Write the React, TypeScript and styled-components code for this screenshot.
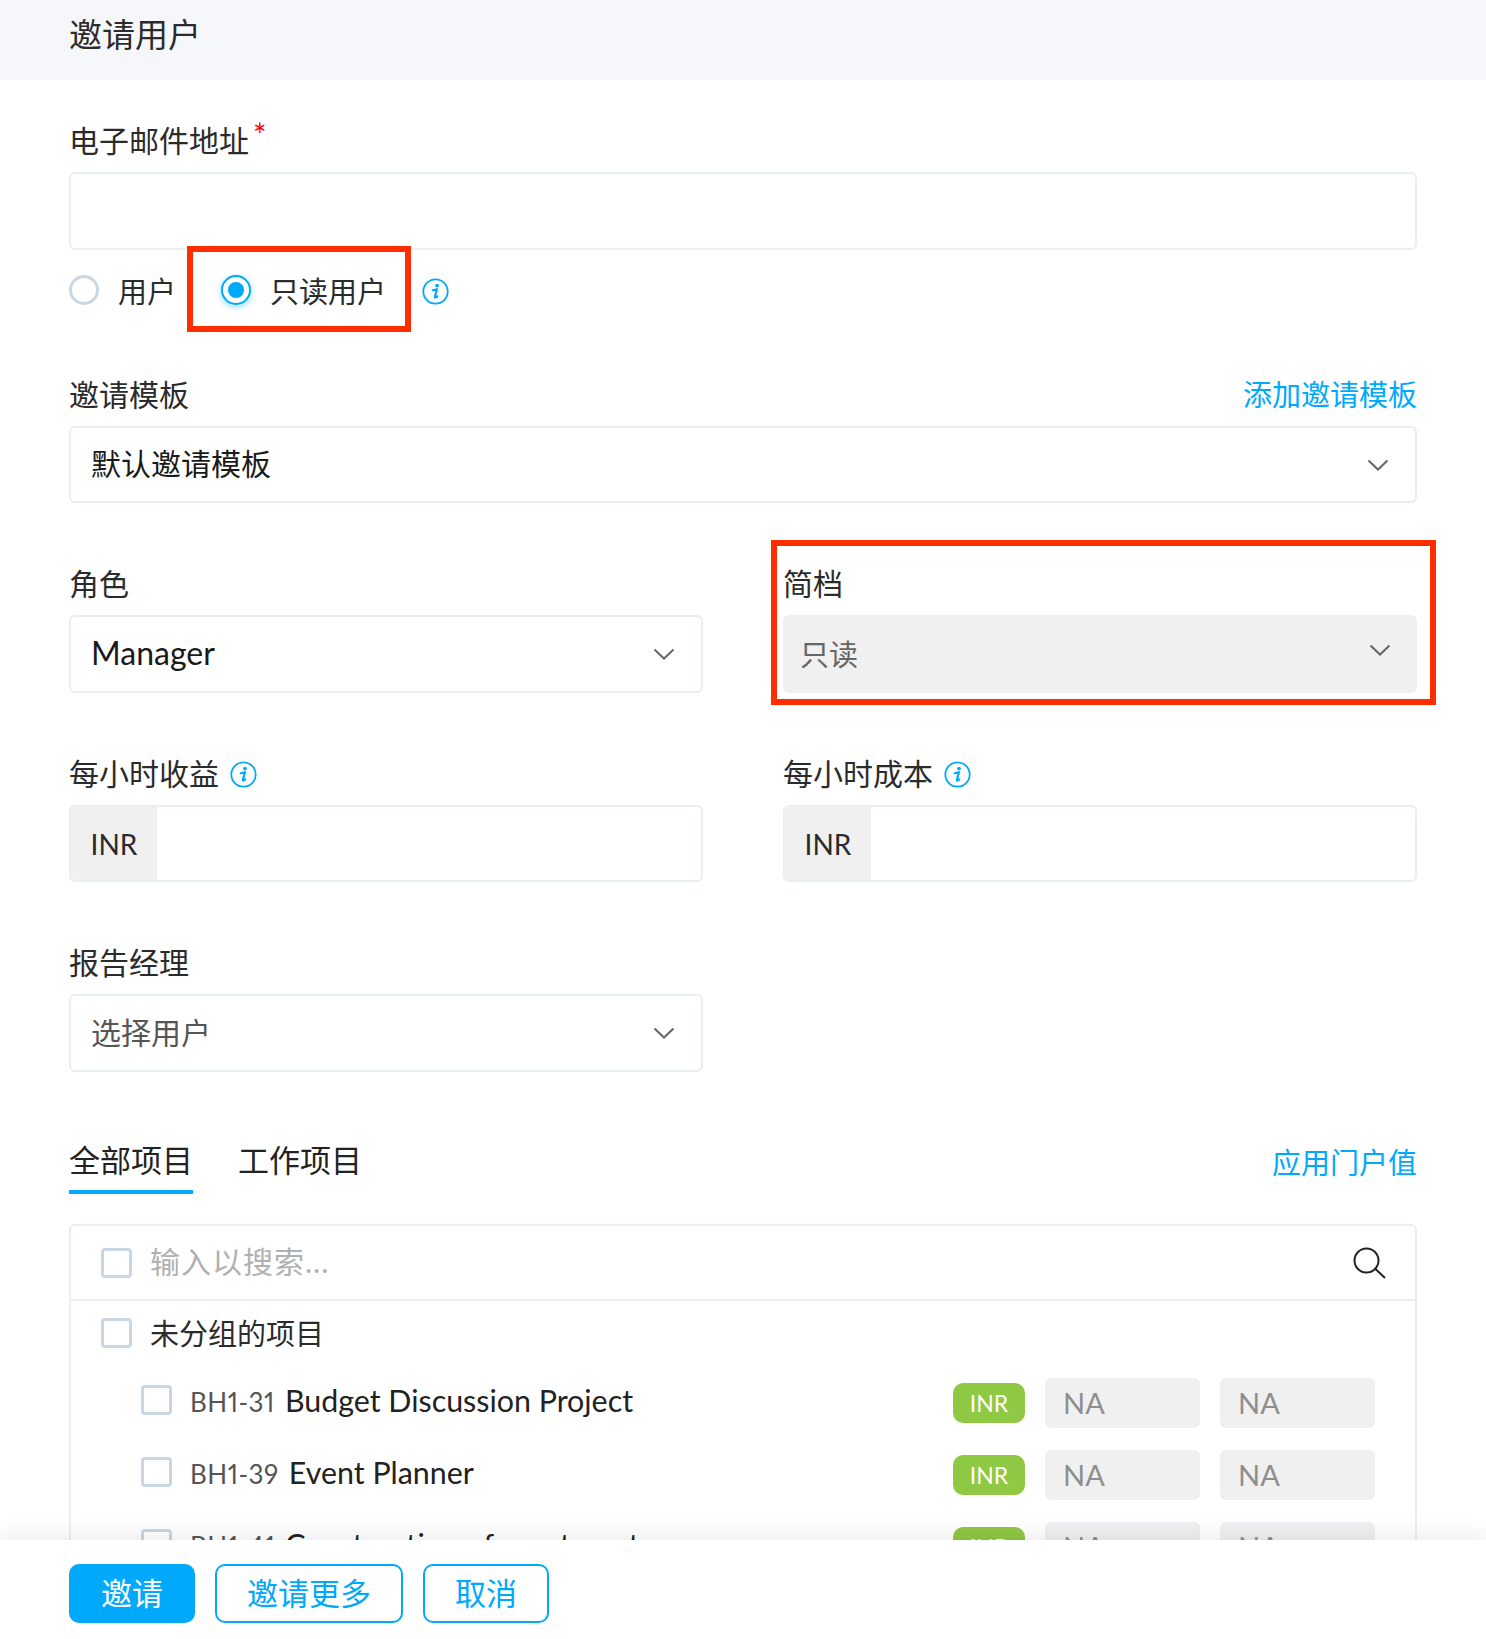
import styled, { createGlobalStyle } from 'styled-components';

const GlobalStyle = createGlobalStyle`
  html, body {
    margin: 0;
    padding: 0;
    background: #fff;
  }
  body {
    font-family: "Lato", "Noto Sans CJK SC", sans-serif;
    color: #222;
  }
  * {
    box-sizing: border-box;
  }
`;

const blue = '#00a9fb';
const line = '#e9eef4';

const Page = styled.div`
  width: 1486px;
  height: 1639px;
  display: flex;
  flex-direction: column;
  overflow: hidden;
`;

const Header = styled.header`
  height: 80px;
  flex: none;
  display: flex;
  align-items: center;
  padding: 0 69px 14px;
  background: #f5f7fb;
  font-size: 33px;
  color: #2b2b2b;
`;

const Body = styled.main`
  flex: 1;
  min-height: 0;
  overflow: hidden;
  padding: 41px 69px 0;
`;

const Field = styled.div`
  position: relative;
  margin-top: ${({ $top }: { $top?: number }) => $top ?? 0}px;
`;

const LabelRow = styled.div`
  height: 36px;
  margin-bottom: 15px;
  display: flex;
  align-items: center;
  justify-content: space-between;
`;

const Label = styled.label`
  display: flex;
  align-items: center;
  gap: 11px;
  font-size: 30px;
  color: #2b2b2b;
  svg {
    margin-top: 5px;
  }
`;

const Required = styled.span`
  position: absolute;
  left: 184px;
  top: -2px;
  color: #f00;
  font-size: 32px;
  line-height: 32px;
`;

const LinkText = styled.a`
  font-size: 29px;
  color: ${blue};
  cursor: pointer;
`;

const TextInput = styled.input`
  display: block;
  width: 100%;
  height: 78px;
  border: 2px solid ${line};
  border-radius: 6px;
  background: #fff;
  outline: none;
`;

const RadioRow = styled.div`
  margin-top: 21px;
  height: 38px;
  display: flex;
  align-items: center;
`;

const RadioOption = styled.div`
  position: relative;
  display: flex;
  align-items: center;
  gap: 19px;
  font-size: 29px;
  color: #2b2b2b;
  & + & {
    margin-left: 45px;
  }
`;

const RadioMark = styled.span<{ $checked?: boolean }>`
  width: 30px;
  height: 30px;
  flex: none;
  border-radius: 50%;
  border: 3px solid ${({ $checked }) => ($checked ? blue : '#c9d6e4')};
  border-width: ${({ $checked }) => ($checked ? '2px' : '3px')};
  display: flex;
  align-items: center;
  justify-content: center;
  background: #fff;
  box-shadow: ${({ $checked }) => ($checked ? '0 2px 6px rgba(0, 169, 251, 0.45)' : 'none')};
  &::after {
    content: '';
    display: ${({ $checked }) => ($checked ? 'block' : 'none')};
    width: 16px;
    height: 16px;
    border-radius: 50%;
    background: ${blue};
  }
`;

const RadioHighlight = styled.div`
  position: absolute;
  left: -34px;
  right: -25px;
  top: -23px;
  bottom: -21px;
  border: 6px solid #ff2d00;
  pointer-events: none;
`;

const FieldHighlight = styled.div`
  position: absolute;
  left: -12px;
  right: -19px;
  top: -24px;
  bottom: -12px;
  border: 6px solid #ff2d00;
  pointer-events: none;
`;

const InfoWrap = styled.span`
  display: inline-flex;
  margin: 2px 0 0 36px;
`;

const SelectBox = styled.div<{ $disabled?: boolean; $height?: number }>`
  height: ${({ $height }) => $height ?? 77}px;
  display: flex;
  align-items: center;
  justify-content: space-between;
  padding: ${({ $disabled }) => ($disabled ? '0 26px 0 17px' : '0 26px 0 20px')};
  border: ${({ $disabled }) => ($disabled ? 'none' : `2px solid ${line}`)};
  border-radius: 6px;
  background: ${({ $disabled }) => ($disabled ? '#f0f0f0' : '#fff')};
`;

const SelectValue = styled.span<{ $tone?: string; $size?: number; $raise?: number }>`
  padding-bottom: ${({ $raise }) => $raise ?? 5}px;
  font-size: ${({ $size }) => $size ?? 30}px;
  color: ${({ $tone }) => $tone ?? '#1a1a1a'};
`;

const Chevron = styled.svg<{ $lift?: number }>`
  width: 22px;
  height: 12px;
  flex: none;
  margin-top: ${({ $lift }) => ($lift ? -$lift * 2 : 0)}px;
`;

const TwoCols = styled.div<{ $top: number }>`
  display: grid;
  grid-template-columns: 634px 634px;
  column-gap: 80px;
  margin-top: ${({ $top }) => $top}px;
`;

const AmountBox = styled.div`
  height: 77px;
  display: flex;
  border: 2px solid ${line};
  border-radius: 6px;
  overflow: hidden;
`;

const Addon = styled.span`
  width: 86px;
  display: flex;
  align-items: center;
  justify-content: center;
  background: #f0f0f0;
  font-size: 28px;
  color: #2b2b2b;
`;

const TabBar = styled.div`
  margin-top: 61px;
  height: 61px;
  display: flex;
  align-items: flex-start;
`;

const Tab = styled.div<{ $active?: boolean }>`
  height: 61px;
  line-height: 54px;
  font-size: 31px;
  margin-right: 45px;
  color: #222;
  border-bottom: 4px solid ${({ $active }) => ($active ? blue : 'transparent')};
`;

const TabLink = styled(LinkText)`
  margin-left: auto;
  margin-top: 7px;
`;

const ProjectPanel = styled.section`
  margin-top: 30px;
  border: 2px solid ${line};
  border-radius: 6px;
`;

const SearchRow = styled.div`
  height: 75px;
  display: flex;
  align-items: center;
  gap: 18px;
  padding: 0 29px 0 30px;
  border-bottom: 2px solid ${line};
`;

const SearchText = styled.span`
  flex: 1;
  padding-bottom: 6px;
  font-size: 30px;
  letter-spacing: 1px;
  color: #b0b0b0;
`;

const CheckBox = styled.span`
  width: 31px;
  height: 30px;
  flex: none;
  border: 3px solid #c9d6e4;
  border-radius: 4px;
  background: #fff;
`;

const GroupRow = styled.div`
  height: 63px;
  display: flex;
  align-items: center;
  gap: 18px;
  padding-left: 30px;
  font-size: 29px;
  color: #2b2b2b;
`;

const GroupName = styled.span`
  padding-bottom: 2px;
`;

const ItemRow = styled.div`
  height: 72px;
  display: flex;
  align-items: center;
  padding: 0 40px 0 70px;
`;

const ItemText = styled.span`
  margin-left: 18px;
  font-size: 30.4px;
  color: #222;
`;

const ItemCode = styled.span`
  font-size: 26px;
  font-variant-numeric: proportional-nums;
  letter-spacing: 0.5px;
  color: #555;
  margin-right: 10px;
`;

const Values = styled.div`
  margin-left: auto;
  margin-top: 6px;
  display: flex;
  align-items: center;
  gap: 20px;
`;

const CurrencyPill = styled.span`
  width: 72px;
  height: 40px;
  display: flex;
  align-items: center;
  justify-content: center;
  border-radius: 10px;
  background: #8fc843;
  color: #fff;
  font-size: 23px;
`;

const ValueBox = styled.span`
  width: 155px;
  height: 50px;
  display: flex;
  align-items: center;
  padding: 0 0 2px 17px;
  border: 1px solid #eceff3;
  border-radius: 6px;
  background: #f0f0f0;
  color: #8e8e8e;
  font-size: 29px;
`;

const Footer = styled.footer`
  position: relative;
  z-index: 1;
  flex: none;
  height: 99px;
  display: flex;
  gap: 20px;
  padding: 24px 0 0 69px;
  background: #fff;
  box-shadow: 0 -6px 20px rgba(0, 0, 0, 0.07);
`;

const Button = styled.button<{ $primary?: boolean; $width: number }>`
  width: ${({ $width }) => $width}px;
  height: 59px;
  padding: 0 0 4px;
  border: 2px solid ${blue};
  border-radius: 10px;
  background: ${({ $primary }) => ($primary ? blue : '#fff')};
  color: ${({ $primary }) => ($primary ? '#fff' : blue)};
  font: inherit;
  font-size: 31px;
`;

const ChevronIcon = ({ lift }: { lift?: number }) => (
  <Chevron viewBox="0 0 22 12" $lift={lift}>
    <path d="M1.5 1.5 11 10.5 20.5 1.5" fill="none" stroke="#666" strokeWidth="2" />
  </Chevron>
);

const InfoIcon = () => (
  <svg width="27" height="27" viewBox="0 0 27 27">
    <circle cx="13.5" cy="13.5" r="12.2" fill="none" stroke={blue} strokeWidth="1.8" />
    <circle cx="15" cy="7.6" r="1.9" fill={blue} />
    <path
      d="M10.8 12.2 15 11.2 12.9 18.8c-.2.8.3 1 1 .6l1.4-1"
      fill="none"
      stroke={blue}
      strokeWidth="2.2"
      strokeLinecap="round"
      strokeLinejoin="round"
    />
  </svg>
);

const SearchIcon = () => (
  <svg width="33" height="32" viewBox="0 0 33 32">
    <circle cx="13.5" cy="13.5" r="12" fill="none" stroke="#222" strokeWidth="2" />
    <path d="M22.5 22 32 31" fill="none" stroke="#222" strokeWidth="2" />
  </svg>
);

const projects = [
  { code: 'BH1-31', name: 'Budget Discussion Project' },
  { code: 'BH1-39', name: 'Event Planner' },
  { code: 'BH1-41', name: 'Construction of apartment' },
];

const App = () => (
  <Page>
    <GlobalStyle />
    <Header>邀请用户</Header>
    <Body>
      <Field>
        <LabelRow>
          <Label>电子邮件地址</Label>
          <Required>*</Required>
        </LabelRow>
        <TextInput readOnly />
      </Field>

      <RadioRow>
        <RadioOption>
          <RadioMark />
          用户
        </RadioOption>
        <RadioOption>
          <RadioMark $checked />
          只读用户
          <RadioHighlight />
        </RadioOption>
        <InfoWrap>
          <InfoIcon />
        </InfoWrap>
      </RadioRow>

      <Field $top={66}>
        <LabelRow>
          <Label>邀请模板</Label>
          <LinkText>添加邀请模板</LinkText>
        </LabelRow>
        <SelectBox>
          <SelectValue>默认邀请模板</SelectValue>
          <ChevronIcon />
        </SelectBox>
      </Field>

      <TwoCols $top={61}>
        <Field>
          <LabelRow>
            <Label>角色</Label>
          </LabelRow>
          <SelectBox $height={78}>
            <SelectValue $size={32} $raise={4}>Manager</SelectValue>
            <ChevronIcon />
          </SelectBox>
        </Field>
        <Field>
          <LabelRow>
            <Label>简档</Label>
          </LabelRow>
          <SelectBox $disabled $height={78}>
            <SelectValue $tone="#666" $size={29} $raise={2}>只读</SelectValue>
            <ChevronIcon lift={4} />
          </SelectBox>
          <FieldHighlight />
        </Field>
      </TwoCols>

      <TwoCols $top={61}>
        <Field>
          <LabelRow>
            <Label>
              每小时收益
              <InfoIcon />
            </Label>
          </LabelRow>
          <AmountBox>
            <Addon>INR</Addon>
          </AmountBox>
        </Field>
        <Field>
          <LabelRow>
            <Label>
              每小时成本
              <InfoIcon />
            </Label>
          </LabelRow>
          <AmountBox>
            <Addon>INR</Addon>
          </AmountBox>
        </Field>
      </TwoCols>

      <TwoCols $top={61}>
        <Field>
          <LabelRow>
            <Label>报告经理</Label>
          </LabelRow>
          <SelectBox $height={78}>
            <SelectValue $tone="#555">选择用户</SelectValue>
            <ChevronIcon />
          </SelectBox>
        </Field>
      </TwoCols>

      <TabBar>
        <Tab $active>全部项目</Tab>
        <Tab>工作项目</Tab>
        <TabLink>应用门户值</TabLink>
      </TabBar>

      <ProjectPanel>
        <SearchRow>
          <CheckBox />
          <SearchText>输入以搜索...</SearchText>
          <SearchIcon />
        </SearchRow>
        <GroupRow>
          <CheckBox />
          <GroupName>未分组的项目</GroupName>
        </GroupRow>
        {projects.map((project) => (
          <ItemRow key={project.code}>
            <CheckBox />
            <ItemText>
              <ItemCode>{project.code}</ItemCode>
              {project.name}
            </ItemText>
            <Values>
              <CurrencyPill>INR</CurrencyPill>
              <ValueBox>NA</ValueBox>
              <ValueBox>NA</ValueBox>
            </Values>
          </ItemRow>
        ))}
      </ProjectPanel>
    </Body>
    <Footer>
      <Button $primary $width={126}>邀请</Button>
      <Button $width={188}>邀请更多</Button>
      <Button $width={126}>取消</Button>
    </Footer>
  </Page>
);

export default App;
